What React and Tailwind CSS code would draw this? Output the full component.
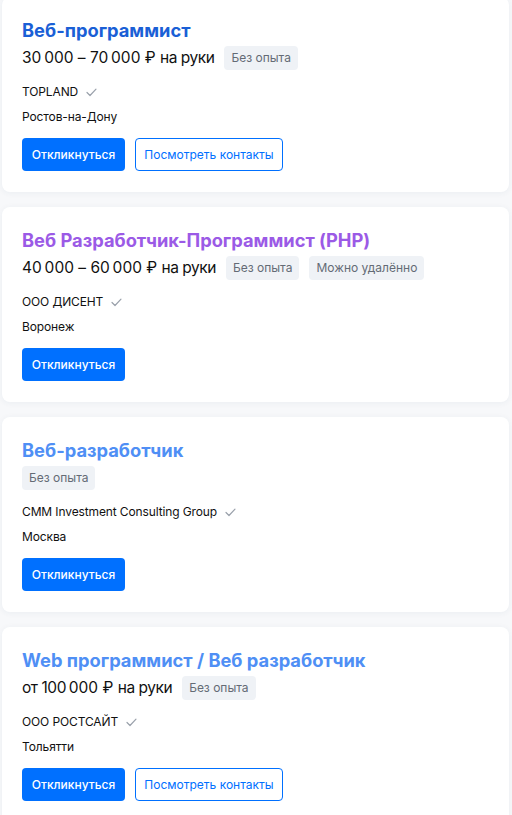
import React from "react";

const S = "\u202F";

const jobs = [
  {
    title: "Веб-программист",
    color: "text-[#1a5fd6]",
    salary: `30${S}000 – 70${S}000 ₽ на руки`,
    tags: ["Без опыта"],
    company: "TOPLAND",
    city: "Ростов-на-Дону",
    contacts: true,
  },
  {
    title: "Веб Разработчик-Программист (PHP)",
    color: "text-[#9b5ae6]",
    salary: `40${S}000 – 60${S}000 ₽ на руки`,
    tags: ["Без опыта", "Можно удалённо"],
    company: "ООО ДИСЕНТ",
    city: "Воронеж",
    contacts: false,
  },
  {
    title: "Веб-разработчик",
    color: "text-[#4f8ff5]",
    salary: null,
    tags: ["Без опыта"],
    company: "CMM Investment Consulting Group",
    city: "Москва",
    contacts: false,
  },
  {
    title: "Web программист / Веб разработчик",
    color: "text-[#4f8ff5]",
    salary: `от 100${S}000 ₽ на руки`,
    tags: ["Без опыта"],
    company: "ООО РОСТСАЙТ",
    city: "Тольятти",
    contacts: true,
  },
];

function Check() {
  return (
    <svg width="11" height="9" viewBox="0 0 11 9" fill="none" className="ml-[8px]">
      <path d="M1 4.5 L4 7.5 L10 1.2" stroke="#9aa1ab" strokeWidth="1.2" strokeLinecap="round" strokeLinejoin="round" />
    </svg>
  );
}

function Card({ job }) {
  return (
    <div className="bg-white rounded-[8px] shadow-[0_1px_6px_rgba(40,60,100,0.06)] px-[20px] pt-[19px] pb-[20px] h-[195px] flex flex-col">
      <div className={`text-[18.3px] leading-[28px] font-bold ${job.color}`}>{job.title}</div>
      <div className="flex items-center gap-[10px] mt-[2px] h-[24px]">
        {job.salary && (
          <span className="text-[15.5px] tracking-[-0.03em] text-[#111] whitespace-pre">{job.salary}</span>
        )}
        {job.tags.map((t) => (
          <span key={t} className="bg-[#eff2f6] text-[#646b75] text-[12px] leading-[24px] px-[7px] rounded-[4px]">
            {t}
          </span>
        ))}
      </div>
      <div className="flex items-center mt-[12px] text-[12px] tracking-[-0.01em] leading-[20px] text-[#111]">
        {job.company}
        <Check />
      </div>
      <div className="mt-[5px] text-[12px] tracking-[-0.01em] leading-[20px] text-[#111]">{job.city}</div>
      <div className="flex gap-[10px] mt-[11px]">
        <button className="h-[33px] w-[103px] bg-[#0070ff] text-white text-[12px] font-medium rounded-[4px]">
          Откликнуться
        </button>
        {job.contacts && (
          <button className="h-[33px] w-[148px] border border-[#0070ff] text-[#0070ff] text-[12px] rounded-[4px] bg-white">
            Посмотреть контакты
          </button>
        )}
      </div>
    </div>
  );
}

export default function App() {
  return (
    <div className="w-[512px] h-[815px] overflow-hidden bg-[#f7f8fa]" style={{ fontFamily: "Inter, 'Noto Sans', sans-serif" }}>
      <div className="flex flex-col gap-[15px] px-[2px] pr-[3px] -mt-[3px]">
        {jobs.map((j) => (
          <Card key={j.title} job={j} />
        ))}
      </div>
    </div>
  );
}
